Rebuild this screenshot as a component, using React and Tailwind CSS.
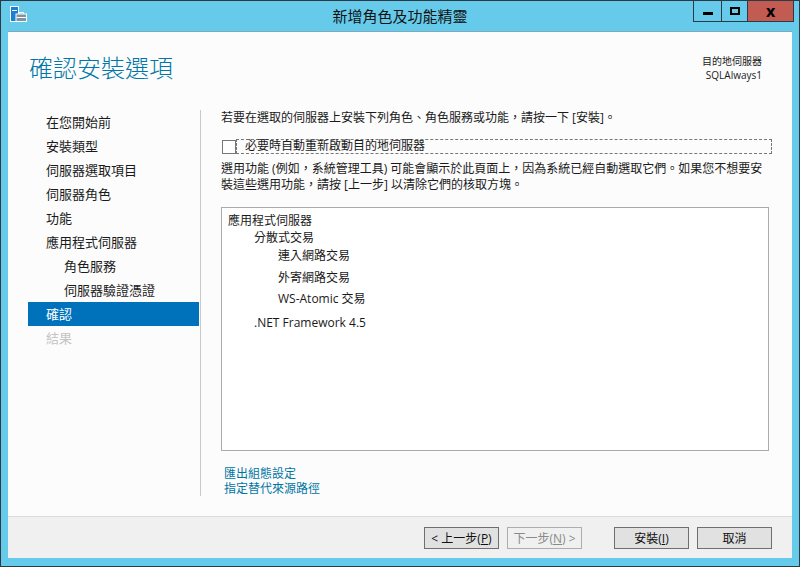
import React from 'react';

const navItems = [
  { label: '在您開始前' },
  { label: '安裝類型' },
  { label: '伺服器選取項目' },
  { label: '伺服器角色' },
  { label: '功能' },
  { label: '應用程式伺服器' },
  { label: '角色服務', sub: true },
  { label: '伺服器驗證憑證', sub: true },
  { label: '確認', active: true },
  { label: '結果', disabled: true },
];

const AppIcon = () => (
  <svg width="17" height="17" viewBox="0 0 17 17" className="block">
    <rect x="0.5" y="0.5" width="8" height="15" fill="#1b7fd6" stroke="#fff" />
    <rect x="2" y="4" width="5" height="1" fill="#fff" />
    <rect x="6" y="8" width="10.5" height="7.5" fill="#7f93a3" stroke="#fff" />
    <path d="M9 8V6.5h4.5V8" fill="none" stroke="#fff" />
    <rect x="6.5" y="11" width="10" height="1" fill="#fff" />
  </svg>
);

const WindowButton = ({ className, children }) => (
  <div className={`h-[21px] flex items-center justify-center border-b border-r border-[#2d3a44] ${className}`}>
    {children}
  </div>
);

const FooterButton = ({ children, disabled, className = '' }) => (
  <button
    type="button"
    className={`w-[75px] h-[22px] pt-px text-[12px] leading-none border ${disabled ? 'border-[#adadad] text-[#8a8a8a] bg-[#f0f0f0]' : 'border-[#6f6f6f] text-[#111] bg-[#e1e1e1]'} ${className}`}
  >
    {children}
  </button>
);

const App = () => {
  return (
    <div className="w-[800px] h-[567px] flex flex-col overflow-hidden bg-[#66cbea] border border-[#2d3a44] text-[12px] text-[#1a1a1a] font-['Open_Sans','Noto_Sans_CJK_TC',sans-serif]">
      <div className="h-[30px] grid grid-cols-[1fr_auto_1fr] shrink-0">
        <div className="pl-[9px] pt-[5px]">
          <AppIcon />
        </div>
        <div className="pt-[5px] text-[15px] leading-[20px] text-[#111]">新增角色及功能精靈</div>
        <div className="flex justify-end pr-[5px]">
          <WindowButton className="w-[29px] border-l">
            <div className="w-[10px] h-[3px] mt-[4px] bg-black" />
          </WindowButton>
          <WindowButton className="w-[26px]">
            <div className="w-[10px] h-[8px] border-2 border-black" />
          </WindowButton>
          <WindowButton className="w-[46px] bg-[#c25b52] font-bold text-[16px] text-black">
            <span className="leading-none">x</span>
          </WindowButton>
        </div>
      </div>

      <div className="flex-1 mx-[7px] mb-[8px] flex flex-col bg-[#fcfcfc] min-h-0 border-t border-[#7fa9bd]">
        <div className="h-[78px] shrink-0 flex justify-between pl-[21px] pr-[30px]">
          <h1 className="mt-[20px] text-[24px] leading-[32px] font-light text-[#0077a8]">確認安裝選項</h1>
          <div className="mt-[22px] text-right text-[10px] leading-[14px]">
            <div>目的地伺服器</div>
            <div>SQLAlways1</div>
          </div>
        </div>

        <div className="flex-1 flex min-h-0 pl-[20px]">
          <nav className="w-[173px] h-[386px] shrink-0 border-r border-[#c9c9c9] text-[13px]">
            {navItems.map((item) => (
              <div
                key={item.label}
                className={`h-[24px] mr-px leading-[24px] ${item.sub ? 'pl-[36px]' : 'pl-[18px]'} ${item.active ? 'bg-[#0072bc] text-white' : ''} ${item.disabled ? 'text-[#c4c4c4]' : ''}`}
              >
                {item.label}
              </div>
            ))}
          </nav>

          <main className="flex-1 pl-[20px] pr-[20px] leading-[16px]">
            <p>若要在選取的伺服器上安裝下列角色、角色服務或功能，請按一下 [安裝]。</p>
            <div className="mt-[13px] flex items-center h-[15px]">
              <span className="w-[14px] h-[14px] ml-px border border-[#777] bg-white shrink-0" />
              <label className="flex-1 h-[15px] pl-[8px] leading-[12px] border border-dashed border-[#777]">必要時自動重新啟動目的地伺服器</label>
            </div>
            <p className="mt-[7px] whitespace-nowrap">
              選用功能 (例如，系統管理工具) 可能會顯示於此頁面上，因為系統已經自動選取它們。如果您不想要安<br />
              裝這些選用功能，請按 [上一步] 以清除它們的核取方塊。
            </p>
            <div className="mt-[14px] w-[548px] h-[244px] border border-[#ababab] bg-white pl-[6px] pt-[5px]">
              <div className="leading-[16px]">應用程式伺服器</div>
              <div className="mt-px pl-[26px] leading-[16px]">分散式交易</div>
              <div className="mt-[2px] pl-[50px] leading-[16px]">連入網路交易</div>
              <div className="mt-[6px] pl-[50px] leading-[16px]">外寄網路交易</div>
              <div className="mt-[5px] pl-[50px] leading-[16px]">WS-Atomic 交易</div>
              <div className="mt-[8px] pl-[26px] leading-[16px]">.NET Framework 4.5</div>
            </div>
            <div className="mt-[15px] pl-[3px] text-[#0076a3] leading-[15px]">
              <div>匯出組態設定</div>
              <div>指定替代來源路徑</div>
            </div>
          </main>
        </div>

        <footer className="h-[42px] shrink-0 bg-[#f0f0f0] border-t border-[#dcdcdc] flex items-start justify-end pt-[10px] pr-[20px]">
          <FooterButton>&lt; 上一步(<u>P</u>)</FooterButton>
          <FooterButton disabled className="ml-[8px]">下一步(<u>N</u>) &gt;</FooterButton>
          <FooterButton className="ml-[32px]">安裝(<u>I</u>)</FooterButton>
          <FooterButton className="ml-[8px]">取消</FooterButton>
        </footer>
      </div>
    </div>
  );
};

export default App;
